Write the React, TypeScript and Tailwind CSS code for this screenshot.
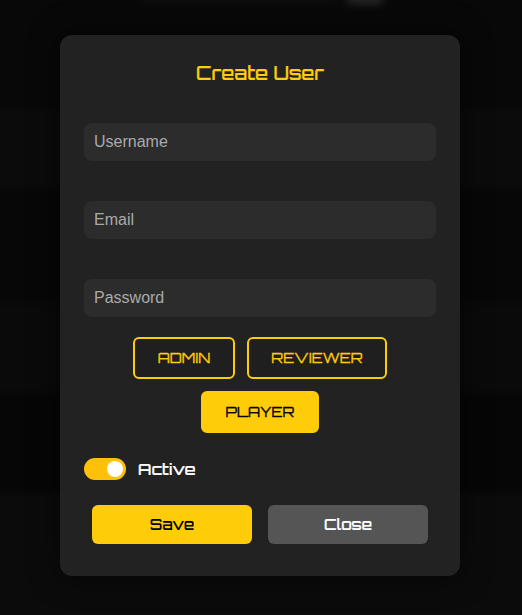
import { useState } from "react";

const display = "font-['Orbitron','DejaVu_Sans',sans-serif]";

function Field({ label, type }: { label: string; type: string }) {
  return (
    <input
      type={type}
      placeholder={label}
      className="block h-[38px] w-full rounded-lg bg-[#2c2c2c] px-[10px] font-['Liberation_Sans',Arial,sans-serif] text-base text-white outline-none placeholder:text-[#aaaaaa]"
    />
  );
}

const roleList = [
  { name: "ADMIN", box: "w-[102px]" },
  { name: "REVIEWER", box: "w-[140px]" },
  { name: "PLAYER", box: "w-[118px]" },
];

function PageBehind() {
  return (
    <div className="flex h-full flex-col bg-[#070707] blur-[4px]">
      <div className="flex h-[108px] shrink-0 items-start justify-center bg-[#080808]">
        <div className="mt-[-4px] ml-[126px] h-[6px] w-[200px] shrink-0 bg-[#121212]" />
        <div className="mt-[-4px] ml-[8px] h-[7px] w-[36px] shrink-0 bg-[#333333]" />
        <div className="w-[126px] shrink-0" />
      </div>
      <div className="h-[80px] shrink-0 bg-[#0b0b0b]" />
      <div className="h-[115px] shrink-0 bg-[#070707]" />
      <div className="h-[91px] shrink-0 bg-[#0a0a0a]" />
      <div className="h-[98px] shrink-0 bg-[#060606]" />
      <div className="grow bg-[#0b0b0b]" />
    </div>
  );
}

export default function App() {
  const [role, setRole] = useState("PLAYER");
  const [active, setActive] = useState(true);

  return (
    <div className={`relative h-[615px] w-[522px] overflow-hidden bg-[#090909] ${display}`}>
      <div className="-mx-5 h-[635px]">
        <PageBehind />
      </div>
      <div className="absolute inset-0 flex items-start pt-[35px] pl-[60px]">
        <form className="flex h-[541px] w-[400px] flex-col rounded-xl bg-[#222222] px-6 pt-6 shadow-[0_0_30px_rgba(0,0,0,0.6)]">
          <h2 className="flex h-7 items-center justify-center text-[18.72px] font-medium text-[#ffcc09] [-webkit-text-stroke:0.2px_#ffcc09]">
            Create User
          </h2>
          <div className="mt-9 flex flex-col gap-10">
            <Field label="Username" type="text" />
            <Field label="Email" type="email" />
            <Field label="Password" type="password" />
          </div>
          <div className="mt-5 flex flex-wrap justify-center gap-3">
            {roleList.map((r) => (
              <button
                key={r.name}
                type="button"
                onClick={() => setRole(r.name)}
                className={`flex h-[42px] items-center justify-center rounded-md border-2 border-[#ffcc09] text-[14.4px] [-webkit-text-stroke:0.3px_currentColor] ${r.box} ${
                  role === r.name ? "bg-[#ffcc09] text-black" : "bg-[#1f1f1f] text-[#ffcc09]"
                }`}
              >
                {r.name}
              </button>
            ))}
          </div>
          <div className="mt-[25px] flex h-[22px] items-center gap-3">
            <button
              type="button"
              role="switch"
              aria-checked={active}
              aria-label="Active"
              onClick={() => setActive(!active)}
              className={`flex h-[22px] w-[42px] items-center rounded-full px-[3px] ${
                active ? "justify-end bg-[#ffc107]" : "justify-start bg-[#555555]"
              }`}
            >
              <span className="size-4 rounded-full bg-white" />
            </button>
            <span className="text-base font-medium text-white [-webkit-text-stroke:0.2px_white]">Active</span>
          </div>
          <div className="mt-[25px] grid grid-cols-2 gap-4 px-2">
            <button type="button" className="flex h-[39px] items-center justify-center rounded-md bg-[#ffcc09] pt-[2px] text-[15.2px] font-medium text-black">
              Save
            </button>
            <button type="button" className="flex h-[39px] items-center justify-center rounded-md bg-[#555555] pt-[2px] text-[15.2px] font-medium text-white [-webkit-text-stroke:0.2px_white]">
              Close
            </button>
          </div>
        </form>
      </div>
    </div>
  );
}
